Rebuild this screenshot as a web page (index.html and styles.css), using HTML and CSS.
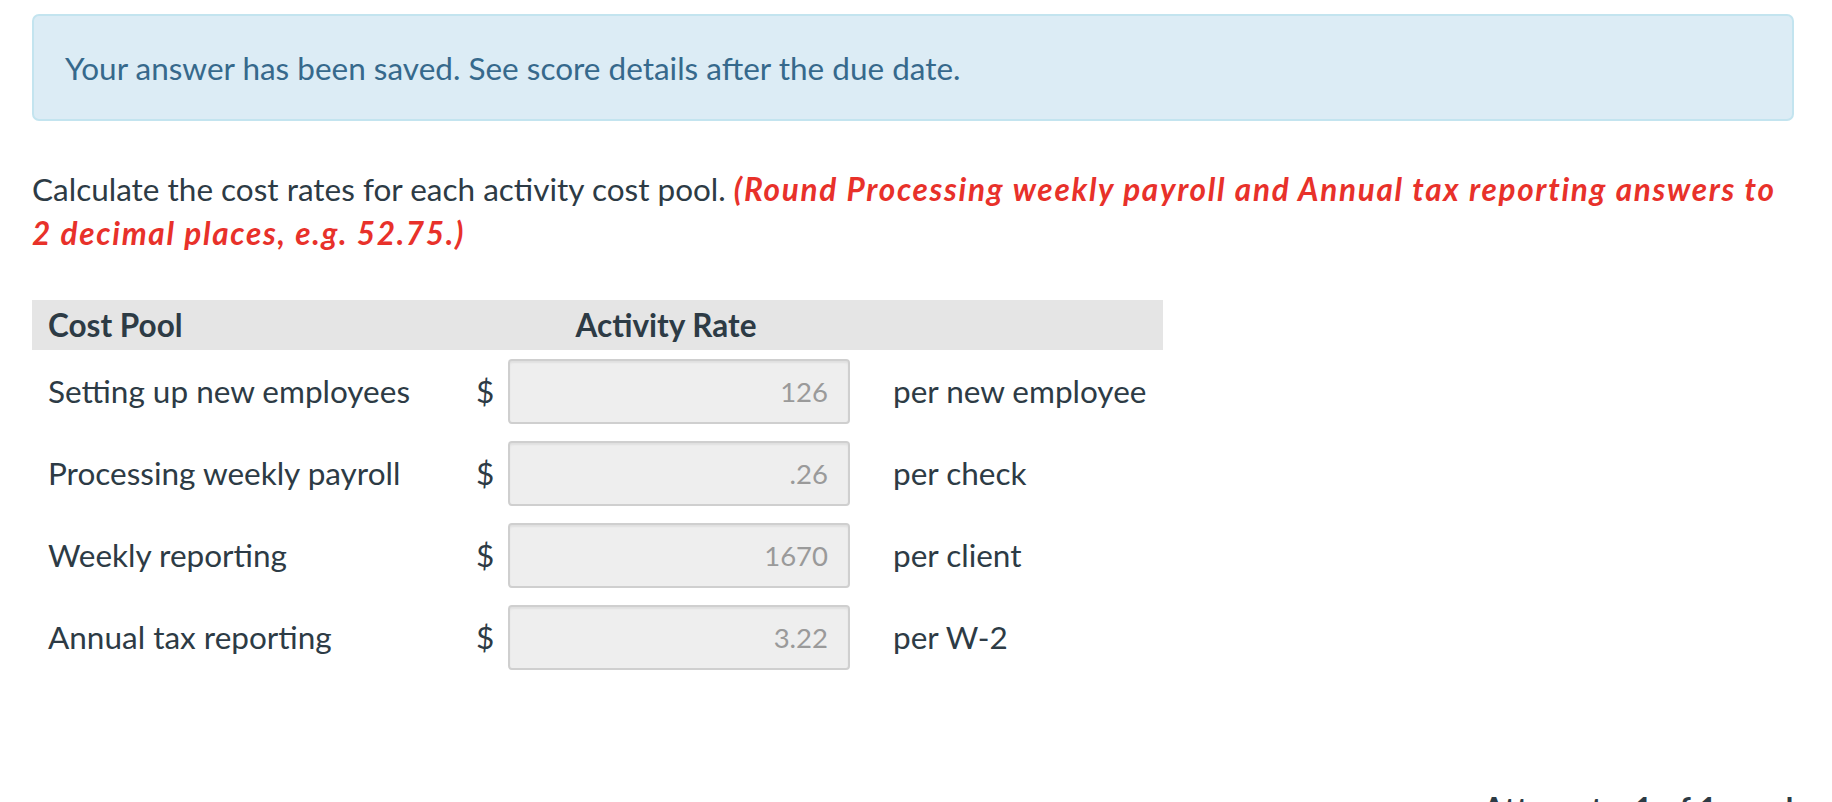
FILE: index.html
```html
<!DOCTYPE html>
<html>
<head>
<meta charset="utf-8">
<link rel="stylesheet" href="styles.css">
</head>
<body>
<div class="page">
  <div class="alert">Your answer has been saved. See score details after the due date.</div>
  <p class="question">Calculate the cost rates for each activity cost pool. <em class="hint">(Round Processing weekly payroll and Annual tax reporting answers to 2 decimal places, e.g. 52.75.)</em></p>
  <div class="grid">
    <div class="head head-pool">Cost Pool</div>
    <div class="head head-rate">Activity Rate</div>
    <div class="head head-rest"></div>

    <div class="cell label">Setting up new employees</div>
    <div class="cell dollar">$</div>
    <div class="cell field"><div class="input">126</div></div>
    <div class="cell unit">per new employee</div>

    <div class="cell label">Processing weekly payroll</div>
    <div class="cell dollar">$</div>
    <div class="cell field"><div class="input">.26</div></div>
    <div class="cell unit">per check</div>

    <div class="cell label">Weekly reporting</div>
    <div class="cell dollar">$</div>
    <div class="cell field"><div class="input">1670</div></div>
    <div class="cell unit">per client</div>

    <div class="cell label">Annual tax reporting</div>
    <div class="cell dollar">$</div>
    <div class="cell field"><div class="input">3.22</div></div>
    <div class="cell unit">per W-2</div>
  </div>
  <div class="attempts">Attempts: 1 of 1 used</div>
</div>
</body>
</html>
```

FILE: styles.css
```css
html, body {
  margin: 0;
  padding: 0;
  background: #ffffff;
}
body {
  font-family: Lato, "Open Sans", sans-serif;
  color: #2d3b45;
  font-size: 31.5px;
  overflow: hidden;
  height: 802px;
}
.page {
  padding: 14px 38px 0 32px;
}
.alert {
  background: #dcecf5;
  border: 2px solid #c3e4ef;
  border-radius: 7px;
  color: #36698c;
  height: 107px;
  box-sizing: border-box;
  padding: 0 31px;
  display: flex;
  align-items: center;
}
.question {
  margin: 46px 0 0 0;
  line-height: 44px;
}
.hint {
  color: #e8312a;
  font-weight: 700;
  font-style: italic;
  letter-spacing: 1.7px;
}
.grid {
  margin-top: 45px;
  width: 1131px;
  display: grid;
  grid-template-columns: 428px 48px 364px 1fr;
  grid-auto-rows: 82px;
  grid-template-rows: 50px;
}
.head {
  background: #e5e5e5;
  font-weight: 700;
  display: flex;
  align-items: center;
  height: 50px;
}
.head-pool {
  padding-left: 16px;
}
.head-rate {
  grid-column: 2 / 4;
  justify-content: center;
}
.cell {
  display: flex;
  align-items: center;
  height: 82px;
}
.label {
  padding-left: 16px;
}
.dollar {
  padding-left: 16px;
}
.field {
  align-items: flex-start;
  padding-top: 9px;
  box-sizing: border-box;
}
.input {
  width: 342px;
  height: 65px;
  box-sizing: border-box;
  background: #eeeeee;
  border: 2px solid #cfcfcf;
  border-radius: 4px;
  box-shadow: inset 0 2px 2px rgba(0,0,0,0.06);
  color: #9a9a9a;
  font-size: 27.5px;
  display: flex;
  align-items: center;
  justify-content: flex-end;
  padding-right: 20px;
}
.unit {
  padding-left: 21px;
}
.attempts {
  position: absolute;
  right: 38px;
  top: 790px;
  font-weight: 700;
  color: #2d3b45;
  letter-spacing: 0.5px;
}
```
